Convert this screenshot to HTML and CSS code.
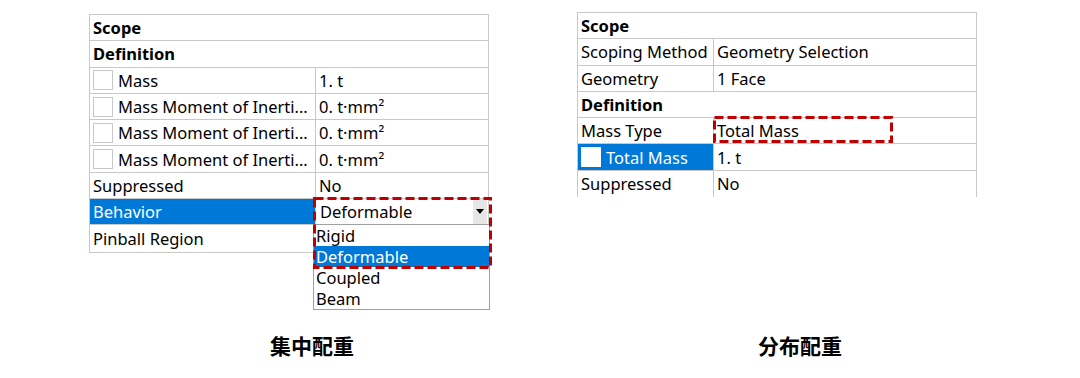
FILE: index.html
```html
<!DOCTYPE html>
<html lang="zh">
<head>
<meta charset="utf-8">
<title>Mass properties</title>
<link rel="stylesheet" href="styles.css">
</head>
<body>
<div class="page">
  <section class="panel panel-left">
    <div class="ptable ptable-left">
      <div class="row head">Scope</div>
      <div class="row head">Definition</div>
      <div class="row"><div class="cell key"><span class="cb"></span>Mass</div><div class="cell val">1. t</div></div>
      <div class="row"><div class="cell key"><span class="cb"></span>Mass Moment of Inerti...</div><div class="cell val">0. t·mm²</div></div>
      <div class="row"><div class="cell key"><span class="cb"></span>Mass Moment of Inerti...</div><div class="cell val">0. t·mm²</div></div>
      <div class="row"><div class="cell key"><span class="cb"></span>Mass Moment of Inerti...</div><div class="cell val">0. t·mm²</div></div>
      <div class="row"><div class="cell key">Suppressed</div><div class="cell val">No</div></div>
      <div class="row"><div class="cell key sel">Behavior</div><div class="cell val combo"><span class="combo-text">Deformable</span><span class="combo-btn"><svg width="8" height="5" viewBox="0 0 8 5"><path d="M0 0h8L4 5z" fill="#000"/></svg></span></div></div>
      <div class="row"><div class="cell key">Pinball Region</div><div class="cell val"></div></div>
      <ul class="dropdown">
        <li>Rigid</li>
        <li class="hl">Deformable</li>
        <li>Coupled</li>
        <li>Beam</li>
      </ul>
      <svg class="mark mark-left" width="179" height="72" viewBox="0 0 179 72"><rect x="1.5" y="1.5" width="176" height="69" fill="none" stroke="#c00000" stroke-width="3" stroke-dasharray="9 4"/></svg>
    </div>
  </section>
  <section class="panel panel-right">
    <div class="ptable ptable-right">
      <div class="row head">Scope</div>
      <div class="row"><div class="cell key">Scoping Method</div><div class="cell val">Geometry Selection</div></div>
      <div class="row"><div class="cell key">Geometry</div><div class="cell val">1 Face</div></div>
      <div class="row head">Definition</div>
      <div class="row"><div class="cell key">Mass Type</div><div class="cell val">Total Mass</div></div>
      <div class="row"><div class="cell key sel"><span class="cb cb-white"></span>Total Mass</div><div class="cell val">1. t</div></div>
      <div class="row last"><div class="cell key">Suppressed</div><div class="cell val">No</div></div>
      <svg class="mark mark-right" width="180" height="27" viewBox="0 0 180 27"><rect x="1.5" y="1.5" width="177" height="24" fill="none" stroke="#c00000" stroke-width="3" stroke-dasharray="9 4"/></svg>
    </div>
  </section>
  <div class="caption">集中配重</div>
  <div class="caption">分布配重</div>
</div>
</body>
</html>
```
FILE: styles.css
```css
html, body {
  margin: 0;
  padding: 0;
  background: #ffffff;
}
body {
  font-family: "Noto Sans", "Open Sans", sans-serif;
  font-size: 16.5px;
  color: #000;
}
.page {
  display: grid;
  grid-template-columns: 400px 400px;
  column-gap: 88px;
  row-gap: 80px;
  padding: 12px 0 0 89px;
  align-items: start;
}
.panel-left {
  padding-top: 2px;
}
.ptable {
  position: relative;
  border: 1px solid #c8c8c8;
}
.ptable-right {
  border-bottom: none;
}
.row {
  display: grid;
  height: 26.3px;
  box-sizing: border-box;
  border-bottom: 1px solid #c8c8c8;
}
.ptable-left .row {
  grid-template-columns: 225px 1fr;
}
.ptable-right .row {
  grid-template-columns: 135px 1fr;
}
.ptable .row:last-of-type,
.row.last {
  border-bottom: none;
}
.row.head {
  display: flex;
  align-items: center;
  padding-left: 3px;
  font-weight: 700;
}
.cell {
  display: flex;
  align-items: center;
  white-space: nowrap;
  overflow: hidden;
}
.key {
  padding-left: 3px;
}
.val {
  border-left: 1px solid #c8c8c8;
  padding-left: 3px;
}
.sel {
  background: #0078d7;
  color: #fff;
}
.cb {
  width: 18px;
  height: 18px;
  border: 1px solid #c8c8c8;
  background: #fff;
  margin-right: 5px;
  flex: none;
}
.cb-white {
  border-color: #fff;
}
.combo {
  padding-left: 0;
  justify-content: space-between;
  background: #fff;
}
.combo-text {
  padding-left: 4px;
}
.combo-btn {
  width: 14px;
  height: 100%;
  background: #e6e6e6;
  display: flex;
  align-items: center;
  justify-content: center;
  margin-right: 1px;
}
.dropdown {
  position: absolute;
  left: 223px;
  top: 209px;
  width: 175px;
  margin: 0;
  padding: 0;
  list-style: none;
  border: 1px solid #a0a0a0;
  background: #fff;
}
.dropdown li {
  height: 21px;
  line-height: 21px;
  padding-left: 2px;
}
.dropdown li.hl {
  background: #0078d7;
  color: #fff;
}
.mark {
  position: absolute;
  display: block;
}
.mark-left {
  left: 223px;
  top: 182px;
}
.mark-right {
  left: 135px;
  top: 103px;
}
.caption {
  font-family: "Noto Sans CJK SC", sans-serif;
  font-weight: 700;
  font-size: 21px;
  line-height: 24px;
  padding-left: 181px;
}
```
